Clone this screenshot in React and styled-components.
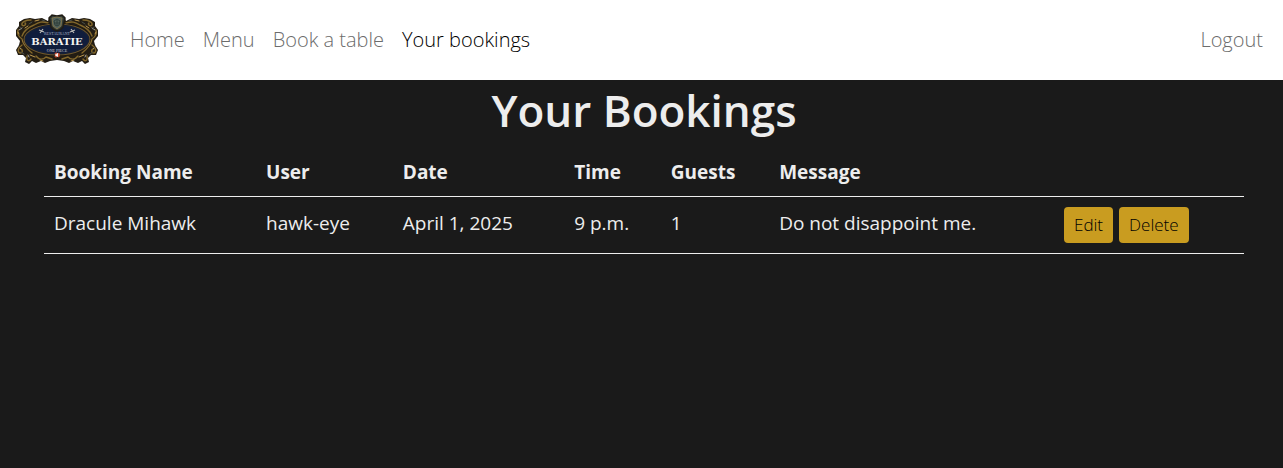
import React from "react";
import styled, { createGlobalStyle } from "styled-components";

const GlobalStyle = createGlobalStyle`
  *, *::before, *::after { box-sizing: border-box; }
  body {
    margin: 0;
    background: #1a1a1a;
    color: #ededed;
    font-family: "Segoe UI", "Open Sans", "Noto Sans", sans-serif;
    font-size: 19px;
    line-height: 28px;
  }
`;

const Navbar = styled.nav`
  display: flex;
  align-items: center;
  height: 80px;
  padding: 0 20px 0 14px;
  background: #fff;
`;

const Brand = styled.a`
  display: flex;
  margin-right: 30px;
`;

const NavList = styled.ul`
  display: flex;
  flex: 1;
  gap: 18px;
  margin: 0;
  padding: 0;
  list-style: none;
`;

const NavItem = styled.li`
  margin-left: ${(p) => (p.$end ? "auto" : "0")};
`;

const NavLink = styled.a`
  color: ${(p) => (p.$active ? "#000" : "#6c6c6c")};
  font-size: 20px;
  font-weight: 300;
  text-decoration: none;
`;

const Main = styled.main`
  padding: 0 39px 0 44px;
`;

const Title = styled.h1`
  margin: 0;
  padding-bottom: 8px;
  font-size: 44px;
  font-weight: 600;
  line-height: 60px;
  text-align: center;
`;

const Table = styled.table`
  width: 100%;
  table-layout: fixed;
  border-collapse: collapse;
`;

const Column = styled.col`
  width: ${(p) => p.$share}%;
`;

const Row = styled.tr`
  border-bottom: 1px solid #ededed;
`;

const HeadCell = styled.th`
  padding: 10px;
  font-weight: 700;
  text-align: left;
  white-space: nowrap;
`;

const Cell = styled.td`
  padding: 10px;
  line-height: 32px;
  text-align: left;
  vertical-align: top;
  white-space: nowrap;
`;

const Actions = styled.div`
  display: flex;
  gap: 6px;
`;

const Button = styled.button`
  height: 36px;
  padding: 0 10px;
  border: 0;
  border-radius: 4px;
  background: #c99c20;
  color: #000;
  font: inherit;
  font-size: 17px;
  font-weight: 300;
  line-height: 36px;
`;

function Scrolls() {
  return (
    <g strokeLinecap="round" strokeLinejoin="round">
      <path
        d="M43 3L36 2L34 7L28 4L21 5L16 4L10 5L5 8L5 12L2 16L2 22L6 27L5 31L2 36L4 41L9 41L12 44L11 48L15 50L18 47L22 49L27 47L31 49L36 47L43 46Z"
        fill="#231d13"
      />
      <g fill="none" stroke="#fff" strokeWidth="1">
        <path d="M8 14L5 16M5 33L7 35M15 43L14 41" opacity="0.6" />
      </g>
      <g fill="none" stroke="#83682c" strokeWidth="1.4">
        <path d="M34 9C28 7 25 8 20 11C15 13 10 16 8 22" />
        <path d="M17 6C12 6 7 8 8 11C10 13 13 10 11 9" />
        <path d="M4 16C3 20 5 23 8 25C9 31 13 35 18 39" />
        <path d="M8 31C4 34 3 38 6 39C9 39 9 36 7 35" />
        <path d="M13 42C12 47 15 48 17 45M22 42C25 46 29 46 32 43L38 45" />
      </g>
      <g fill="none" stroke="#bd9850" strokeWidth="1">
        <path d="M21 7L25 6M11 14L14 12M4 18L5 20M9 27L11 31M16 41L21 43M26 46L29 47" />
      </g>
      <g fill="none" stroke="#4c514a" strokeWidth="1">
        <path d="M18 8L15 10M28 6L31 7M6 13L7 15M7 38L10 40" />
      </g>
    </g>
  );
}

function Logo() {
  return (
    <svg width="86" height="52" viewBox="0 0 86 52" role="img" aria-label="Restaurant Baratie">
      <Scrolls />
      <g transform="translate(86 0) scale(-1 1)"><Scrolls /></g>
      <ellipse cx="43" cy="25.5" rx="34" ry="16.5" fill="#14110d" />
      <ellipse cx="43" cy="25.5" rx="33" ry="15.5" fill="#101d3c" stroke="#6d562a" strokeWidth="1.2" />
      <ellipse cx="43" cy="25.5" rx="31.5" ry="14" fill="none" stroke="#1b2232" strokeWidth="0.8" />
      <g stroke="#b9b8b4" strokeWidth="1.2" fill="none">
        <path d="M25 16L30 18M26 19L29 15M56 18L61 16M57 15L60 19" />
      </g>
      <path d="M35 4L38 1L43 2L48 1L51 4L49 13Q47 16 43 17Q39 16 37 13Z" fill="#303a36" stroke="#201c14" strokeWidth="1.5" />
      <path d="M38 4L43 3L48 4L47 12L43 15L39 12Z" fill="#53635b" stroke="#85754a" strokeWidth="0.9" />
      <path d="M40 7L43 5L46 7L45 11L43 12L41 11ZM43 6V12M40 9H46" fill="none" stroke="#2f3f3b" />
      <g textAnchor="middle">
        <text x="43" y="20.5" fontFamily="Liberation Serif, serif" fontSize="4" fill="#a5b0c5">RESTAURANT</text>
        <text x="43" y="31" fontFamily="DejaVu Serif, serif" fontSize="10" fontWeight="700" fill="#f4f4f0">BARATIE</text>
        <text x="43" y="37.5" fontFamily="Liberation Serif, serif" fontSize="4" fill="#d0d5de">ONE PIECE</text>
      </g>
      <circle cx="43" cy="41" r="2" fill="#fff" stroke="#c4472c" strokeWidth="1.8" strokeDasharray="1.8 1.4" />
    </svg>
  );
}

const links = ["Home", "Menu", "Book a table", "Your bookings"];
const columns = [
  { label: "Booking Name", share: 17.67 },
  { label: "User", share: 11.4 },
  { label: "Date", share: 14.28 },
  { label: "Time", share: 8.05 },
  { label: "Guests", share: 9.03 },
  { label: "Message", share: 23.74 },
  { label: "", share: 15.83 },
];
const bookings = [
  ["Dracule Mihawk", "hawk-eye", "April 1, 2025", "9 p.m.", "1", "Do not disappoint me."],
];

export default function App() {
  return (
    <>
      <GlobalStyle />
      <Navbar>
        <Brand href="#"><Logo /></Brand>
        <NavList>
          {links.map((label) => (
            <NavItem key={label}>
              <NavLink href="#" $active={label === "Your bookings"}>{label}</NavLink>
            </NavItem>
          ))}
          <NavItem $end><NavLink href="#">Logout</NavLink></NavItem>
        </NavList>
      </Navbar>
      <Main>
        <Title>Your Bookings</Title>
        <Table>
          <colgroup>
            {columns.map((c) => <Column key={c.label} $share={c.share} />)}
          </colgroup>
          <thead>
            <Row>
              {columns.map((c) =>
                c.label ? <HeadCell key={c.label} scope="col">{c.label}</HeadCell> : <td key="actions" />
              )}
            </Row>
          </thead>
          <tbody>
            {bookings.map((b) => (
              <Row key={b[0]}>
                {b.map((value) => <Cell key={value}>{value}</Cell>)}
                <Cell>
                  <Actions>
                    <Button type="button">Edit</Button>
                    <Button type="button">Delete</Button>
                  </Actions>
                </Cell>
              </Row>
            ))}
          </tbody>
        </Table>
      </Main>
    </>
  );
}
